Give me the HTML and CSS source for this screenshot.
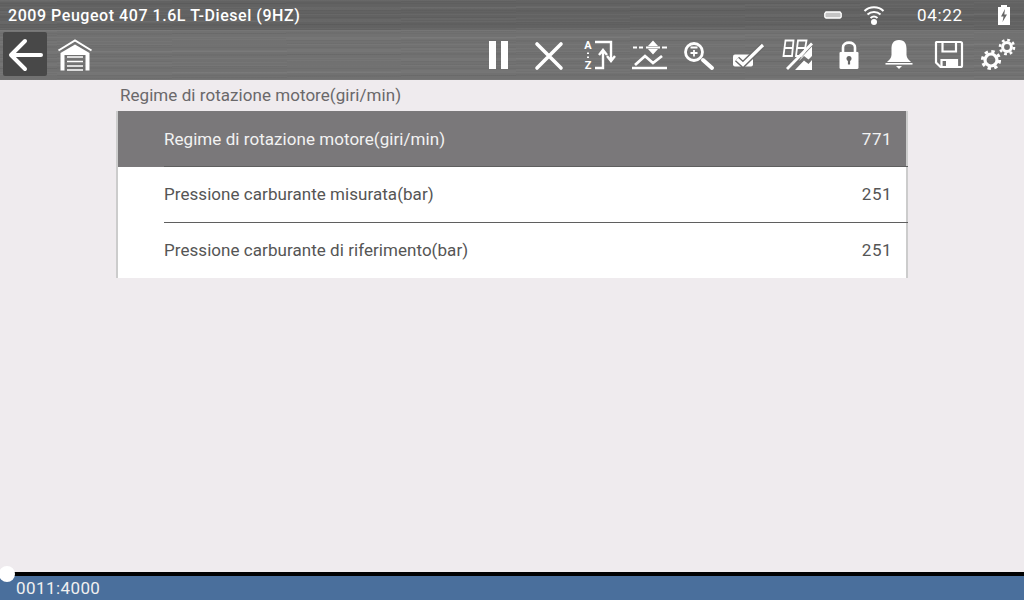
FILE: index.html
```html
<!DOCTYPE html>
<html lang="it">
<head>
<meta charset="utf-8">
<title>Regime di rotazione motore</title>
<link rel="stylesheet" href="styles.css">
</head>
<body>
<div class="app">
  <header class="statusbar">
    <div class="vehicle">2009 Peugeot 407 1.6L T-Diesel (9HZ)</div>
    <div class="status-icons">
      <svg class="st-usb" viewBox="0 0 18 8"><path d="M2 1H16L17.200 2.500V6L16 7H2L.8 6V2.500Z" fill="#c4c4c4" stroke="#fff" stroke-width="1.300"/></svg>
      <svg class="st-wifi" viewBox="0 0 22 22"><g fill="none" stroke="#fff" stroke-width="2"><path d="M1.500 7C6.500 2 15.500 2 20.500 7"/><path d="M4.500 10.500C8 7.300 14 7.300 17.500 10.500"/><path d="M7.500 14C9.500 12.300 12.500 12.300 14.500 14"/></g><circle cx="11" cy="18" r="3" fill="#fff"/></svg>
      <span class="clock">04:22</span>
      <svg class="st-batt" viewBox="0 0 12 20"><path d="M3 0H9V2H12V20H0V2H3Z" fill="#fff"/><path d="M7 4L3 11.500H5.500L4.500 17L9 9.500H6.300Z" fill="#666"/></svg>
    </div>
  </header>

  <nav class="toolbar">
    <button class="back" aria-label="Indietro">
      <svg viewBox="0 0 44 44"><path d="M38 23H8.500M22 9L8 23L22 37" fill="none" stroke="#fff" stroke-width="4" stroke-linecap="round" stroke-linejoin="round"/></svg>
    </button>
    <button class="home" aria-label="Home">
      <svg viewBox="0 0 40 40"><path d="M3.500 15.500L20 5.500L36.500 15.500" fill="none" stroke="#fff" stroke-width="2"/><path d="M20 9.500L5.500 18V35.500H9.500V20H30.500V35.500H34.500V18Z" fill="#fff"/><path d="M12 22H28M12 26.500H28M12 31H28M12 35H28" stroke="#fff" stroke-width="1.700"/></svg>
    </button>
    <div class="spacer"></div>

    <button class="tool"><svg viewBox="0 0 40 40"><path d="M10 6H17V34H10ZM22 6H29V34H22Z" fill="#fff"/></svg></button>

    <button class="tool"><svg viewBox="0 0 40 40"><path d="M8 9L32 33M32 9L8 33" stroke="#fff" stroke-width="3.600" stroke-linecap="round"/></svg></button>

    <button class="tool"><svg viewBox="0 0 40 40">
      <text x="9" y="14" class="az">A</text><text x="9" y="34" class="az">Z</text>
      <path d="M9 17.500V19M9 21.500V23" stroke="#fff" stroke-width="2"/>
      <path d="M16 7H32V25M28 21L32 26L36 21" fill="none" stroke="#fff" stroke-width="2.400"/>
      <path d="M16 33H24V15M20 20L24 15L28 20" fill="none" stroke="#fff" stroke-width="2.400"/>
    </svg></button>

    <button class="tool"><svg viewBox="0 0 40 40">
      <path d="M4 12.500H8M10 12.500H14M17 12.500H31M33 12.500H38" stroke="#fff" stroke-width="1.800"/>
      <path d="M24 5.500L29 11H19ZM24 19.500L29 14H19Z" fill="#fff"/>
      <path d="M6 30L16 21L24 28L33 21" fill="none" stroke="#fff" stroke-width="2.800"/>
      <path d="M3 33H38" stroke="#fff" stroke-width="2.600"/>
    </svg></button>

    <button class="tool"><svg viewBox="0 0 40 40">
      <circle cx="15" cy="17" r="8.500" fill="none" stroke="#fff" stroke-width="2.800"/>
      <path d="M11.500 12.500H18.500M15 15V21.500M11.500 18H18.500" stroke="#fff" stroke-width="1.800"/>
      <path d="M24 25L33 33" stroke="#fff" stroke-width="4" stroke-linecap="round"/>
    </svg></button>

    <button class="tool"><svg viewBox="0 0 40 40">
      <rect x="4" y="19.500" width="20" height="12" rx="2" fill="#fff"/>
      <path d="M8 24L14 29.500L34 10" fill="none" stroke="#6b6b6b" stroke-width="6"/>
      <path d="M8 24L14 29.500L34 10" fill="none" stroke="#fff" stroke-width="3.200"/>
    </svg></button>

    <button class="tool"><svg viewBox="0 0 40 40">
      <g fill="none" stroke="#fff" stroke-width="1.800"><path d="M6.500 5.500H14.500L13 21H4.500ZM5.500 13H13.800"/><path d="M19 5.500H27.500L25.500 17L22 21H17ZM18 13H26.500"/></g>
      <path d="M33 8.500L8 34" stroke="#fff" stroke-width="2.800"/>
      <path d="M16 35L25 25.500L29.500 29L33 25V35Z" fill="#fff"/>
      <path d="M22 23L33 11.500V21L29.500 24.500L25 21L20 26Z" fill="#fff"/>
    </svg></button>

    <button class="tool"><svg viewBox="0 0 40 40">
      <path d="M14 18V12.500C14 6 26 6 26 12.500V18" fill="none" stroke="#fff" stroke-width="2.600"/>
      <path d="M11.500 17H28.500Q29.500 17 29.500 18V32.500Q29.500 34 28 34H12Q10.500 34 10.500 32.500V18Q10.500 17 11.500 17Z" fill="#fff"/>
      <circle cx="20" cy="23.500" r="2.500" fill="#666"/><path d="M18.900 24.500H21.100V29.500H18.900Z" fill="#666"/>
    </svg></button>

    <button class="tool"><svg viewBox="0 0 40 40">
      <path d="M20 5C14 5 12.500 9 12.500 14V20C12.500 23 10 25 8 27H32C30 25 27.500 23 27.500 20V14C27.500 9 26 5 20 5Z" fill="#fff"/>
      <path d="M6.500 28.800H33.500" stroke="#fff" stroke-width="1.600"/><path d="M17 31H23L20 34Z" fill="#fff"/>
    </svg></button>

    <button class="tool"><svg viewBox="0 0 40 40">
      <path d="M7.500 7H31.500Q33 7 33 8.500V30.500Q33 32 31.500 32H11.500L7 27.500V7.500Z" fill="none" stroke="#fff" stroke-width="2.200"/>
      <path d="M13.500 7V16.500H27V7" fill="none" stroke="#fff" stroke-width="2.200"/>
      <path d="M12.500 32V25H28V32" fill="none" stroke="#fff" stroke-width="2.200"/>
      <path d="M17 25H28V32H17Z" fill="#fff"/>
    </svg></button>

    <button class="tool"><svg viewBox="0 0 40 40">
      <g fill="none" stroke="#fff">
        <circle cx="12" cy="25" r="6" stroke-width="3.200"/>
        <circle cx="12" cy="25" r="8.600" stroke-width="3" stroke-dasharray="3.380 3.380"/>
        <circle cx="28" cy="12" r="4.400" stroke-width="3"/>
        <circle cx="28" cy="12" r="7" stroke-width="2.600" stroke-dasharray="2.750 2.750"/>
      </g>
    </svg></button>
  </nav>

  <main class="content">
    <div class="panel">
      <h1 class="panel-title">Regime di rotazione motore(giri/min)</h1>
      <ul class="rows">
        <li class="row selected"><span>Regime di rotazione motore(giri/min)</span><span class="val">771</span></li>
        <li class="row"><span>Pressione carburante misurata(bar)</span><span class="val">251</span></li>
        <li class="row"><span>Pressione carburante di riferimento(bar)</span><span class="val">251</span></li>
      </ul>
    </div>
  </main>

  <footer class="bottom">
    <div class="track"><span class="knob"></span></div>
    <div class="code">0011:4000</div>
  </footer>
</div>
</body>
</html>
```
FILE: styles.css
```css
* { box-sizing: border-box; }
html, body { margin: 0; height: 100%; }
body { font-family: Roboto, "Noto Sans", sans-serif; background: #efebee; overflow: hidden; }
.app { width: 1024px; height: 600px; display: flex; flex-direction: column; }

.statusbar, .toolbar {
  background-image:
    repeating-linear-gradient(180deg, rgba(255,255,255,.035) 0 1px, transparent 1px 3px, rgba(0,0,0,.04) 3px 4px, transparent 4px 7px),
    repeating-linear-gradient(179.500deg, rgba(255,255,255,.03) 0 2px, transparent 2px 5px, rgba(0,0,0,.03) 5px 6px, transparent 6px 11px);
}
.statusbar {
  height: 30px; flex: none; display: flex; align-items: center; justify-content: space-between;
  padding-left: 8px; background-color: #626262; color: #fff;
}
.vehicle { font-size: 16px; font-weight: 500; letter-spacing: .55px; }
.status-icons { display: flex; align-items: center; }
.st-usb { width: 18px; height: 8px; margin-right: 21px; }
.st-wifi { width: 22px; height: 22px; margin-right: 32px; }
.clock { font-size: 17px; letter-spacing: .7px; width: 45px; margin-right: 36px; }
.st-batt { width: 12px; height: 20px; margin-right: 14px; }

.toolbar {
  height: 50px; flex: none; display: flex; align-items: center;
  padding-left: 3px; background-color: #717171;
}
button { border: 0; padding: 0; background: none; display: flex; align-items: center; justify-content: center; }
.back { width: 44px; height: 44px; border-radius: 2px; background: #484848; margin-top: -2px; }
.back svg { width: 44px; height: 44px; }
.home { width: 40px; height: 40px; margin-left: 8px; }
.home svg { width: 40px; height: 40px; }
.spacer { flex: 1; }
.tool { width: 50px; height: 50px; }
.tool svg { width: 40px; height: 40px; }
.az { font: 700 11px Roboto, sans-serif; fill: #fff; text-anchor: middle; }

.content { flex: 1; min-height: 0; padding-left: 116px; }
.panel { width: 792px; }
.panel-title {
  margin: 0; height: 31px; padding: 0 0 2px 4px; display: flex; align-items: center;
  font-size: 17px; font-weight: 400; color: #6a686a; letter-spacing: .05px;
}
.rows { list-style: none; margin: 0; padding: 0; border-left: 2px solid #ccc; border-right: 2px solid #ccc; background: #fff; }
.row {
  height: 55.667px; display: flex; align-items: center; justify-content: space-between;
  padding: 0 14px 1px 46px; font-size: 17px; color: #555; letter-spacing: .05px; position: relative;
}
.row + .row::before { content: ""; position: absolute; left: 46px; right: -2px; top: -.5px; height: 1px; background: #5f5f5f; }
.row.selected { background: #7a787a; color: #f2f2f2; padding-bottom: 0; }
.val { letter-spacing: .5px; }

.bottom { flex: none; height: 28px; position: relative; }
.track { height: 4px; background: #000; }
.knob { position: absolute; left: -1px; top: -6px; width: 16px; height: 16px; border-radius: 50%; background: #fff; }
.code { height: 24px; padding-left: 16px; background: #4a6f9c; color: #f0f0f0; font-size: 17px; letter-spacing: .42px; display: flex; align-items: center; }
```
